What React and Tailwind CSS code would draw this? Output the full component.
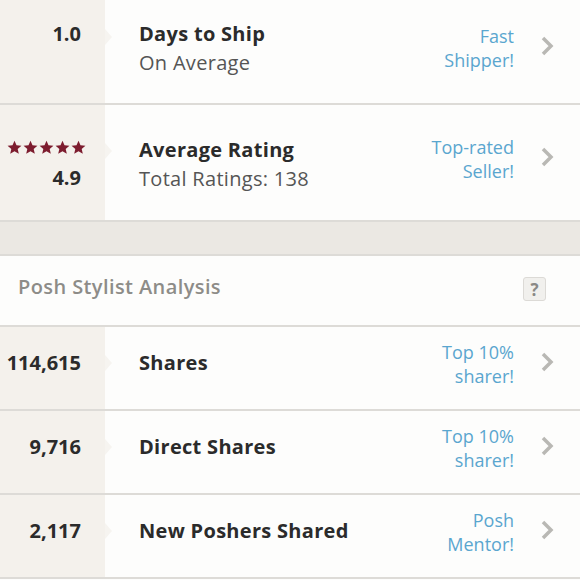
const FONT = { fontFamily: '"Open Sans", Lato, sans-serif' };

const stats = [
  { value: '114,615', title: 'Shares', badge: ['Top 10%', 'sharer!'] },
  { value: '9,716', title: 'Direct Shares', badge: ['Top 10%', 'sharer!'] },
  { value: '2,117', title: 'New Poshers Shared', badge: ['Posh', 'Mentor!'] },
];

function Chevron() {
  return (
    <svg width="14" height="22" viewBox="0 0 14 22" className="-mt-[4px] shrink-0">
      <path d="M3 3l8 8-8 8" fill="none" stroke="#b9b8b4" strokeWidth="3.5" />
    </svg>
  );
}

function Stars() {
  return (
    <div className="flex gap-[1px]">
      {[0, 1, 2, 3, 4].map((i) => (
        <svg key={i} width="15" height="15" viewBox="0 0 24 24">
          <path
            d="M12 1l3.2 7.3 7.9.7-6 5.2 1.8 7.8L12 18l-6.9 4 1.8-7.8-6-5.2 7.9-.7z"
            fill="#7d1d2f"
          />
        </svg>
      ))}
    </div>
  );
}

function Row({ left, children, badge, height, notchTop, shift = '', rightShift = '' }) {
  return (
    <div className="flex border-b-2 border-[#dddbd7] bg-[#fdfdfc]" style={{ height }}>
      <div className={`relative flex w-[105px] shrink-0 flex-col items-end justify-center bg-[#f4f1ec] pr-[24px] ${shift}`}>
        {left}
        <div
          className="absolute right-[-7px] h-0 w-0 border-y-[8px] border-l-[7px] border-y-transparent border-l-[#f6f4f0]"
          style={{ top: notchTop }}
        />
      </div>
      <div className={`flex flex-1 items-center pl-[34px] pr-[26px] ${shift}`}>
        <div className="flex-1 tracking-[0.3px]">{children}</div>
        <div className={`flex items-center ${rightShift}`}>
          <div className="mr-[26px] text-right text-[18px] leading-[24px] text-[#5aa6cf]">
            <div>{badge[0]}</div>
            <div>{badge[1]}</div>
          </div>
          <Chevron />
        </div>
      </div>
    </div>
  );
}

export default function App() {
  return (
    <div className="h-[580px] w-[580px] overflow-hidden bg-[#fdfdfc] text-[#2b2b2b]" style={FONT}>
      <div className="-mt-[9px]">
        <Row
          height={114}
          notchTop="calc(50% - 18px)"
          badge={['Fast', 'Shipper!']}
          shift="pt-[2px]"
          left={<span className="-mt-[28px] text-[20px] font-bold">1.0</span>}
        >
          <div className="text-[20px] font-bold leading-[29px]">Days to Ship</div>
          <div className="text-[20px] leading-[29px] text-[#555]">On Average</div>
        </Row>
        <Row
          height={117}
          notchTop="calc(50% - 20px)"
          badge={['Top-rated', 'Seller!']}
          shift="pt-[3px]"
          rightShift="-mt-[10px]"
          left={
            <div className="-mr-[5px] mt-[4px] flex flex-col items-end">
              <Stars />
              <span className="mr-[5px] mt-[8px] text-[20px] font-bold">4.9</span>
            </div>
          }
        >
          <div className="text-[20px] font-bold leading-[29px]">Average Rating</div>
          <div className="text-[20px] leading-[29px] text-[#555]">Total Ratings: 138</div>
        </Row>
      </div>

      <div className="h-[34px] border-b-2 border-[#dddbd7] bg-[#ebe8e3]" />

      <div className="flex h-[71px] items-center justify-between border-b-2 border-[#dddbd7] bg-[#fdfdfc] pb-[7px] pl-[18px] pr-[34px]">
        <span className="text-[20px] font-semibold tracking-[0.4px] text-[#8d8c88]">Posh Stylist Analysis</span>
        <span className="mt-[4px] flex h-[24px] w-[23px] items-center justify-center rounded-[3px] border border-[#dcdad6] bg-[#f1f0ed] text-[17px] font-bold leading-none text-[#8a8986]">
          ?
        </span>
      </div>

      {stats.map((s) => (
        <Row
          key={s.title}
          height={84}
          notchTop="calc(50% - 13px)"
          badge={s.badge}
          shift="pb-[10px]"
          rightShift="mt-[1px]"
          left={<span className="text-[20px] font-bold">{s.value}</span>}
        >
          <div className="text-[20px] font-bold">{s.title}</div>
        </Row>
      ))}
    </div>
  );
}
